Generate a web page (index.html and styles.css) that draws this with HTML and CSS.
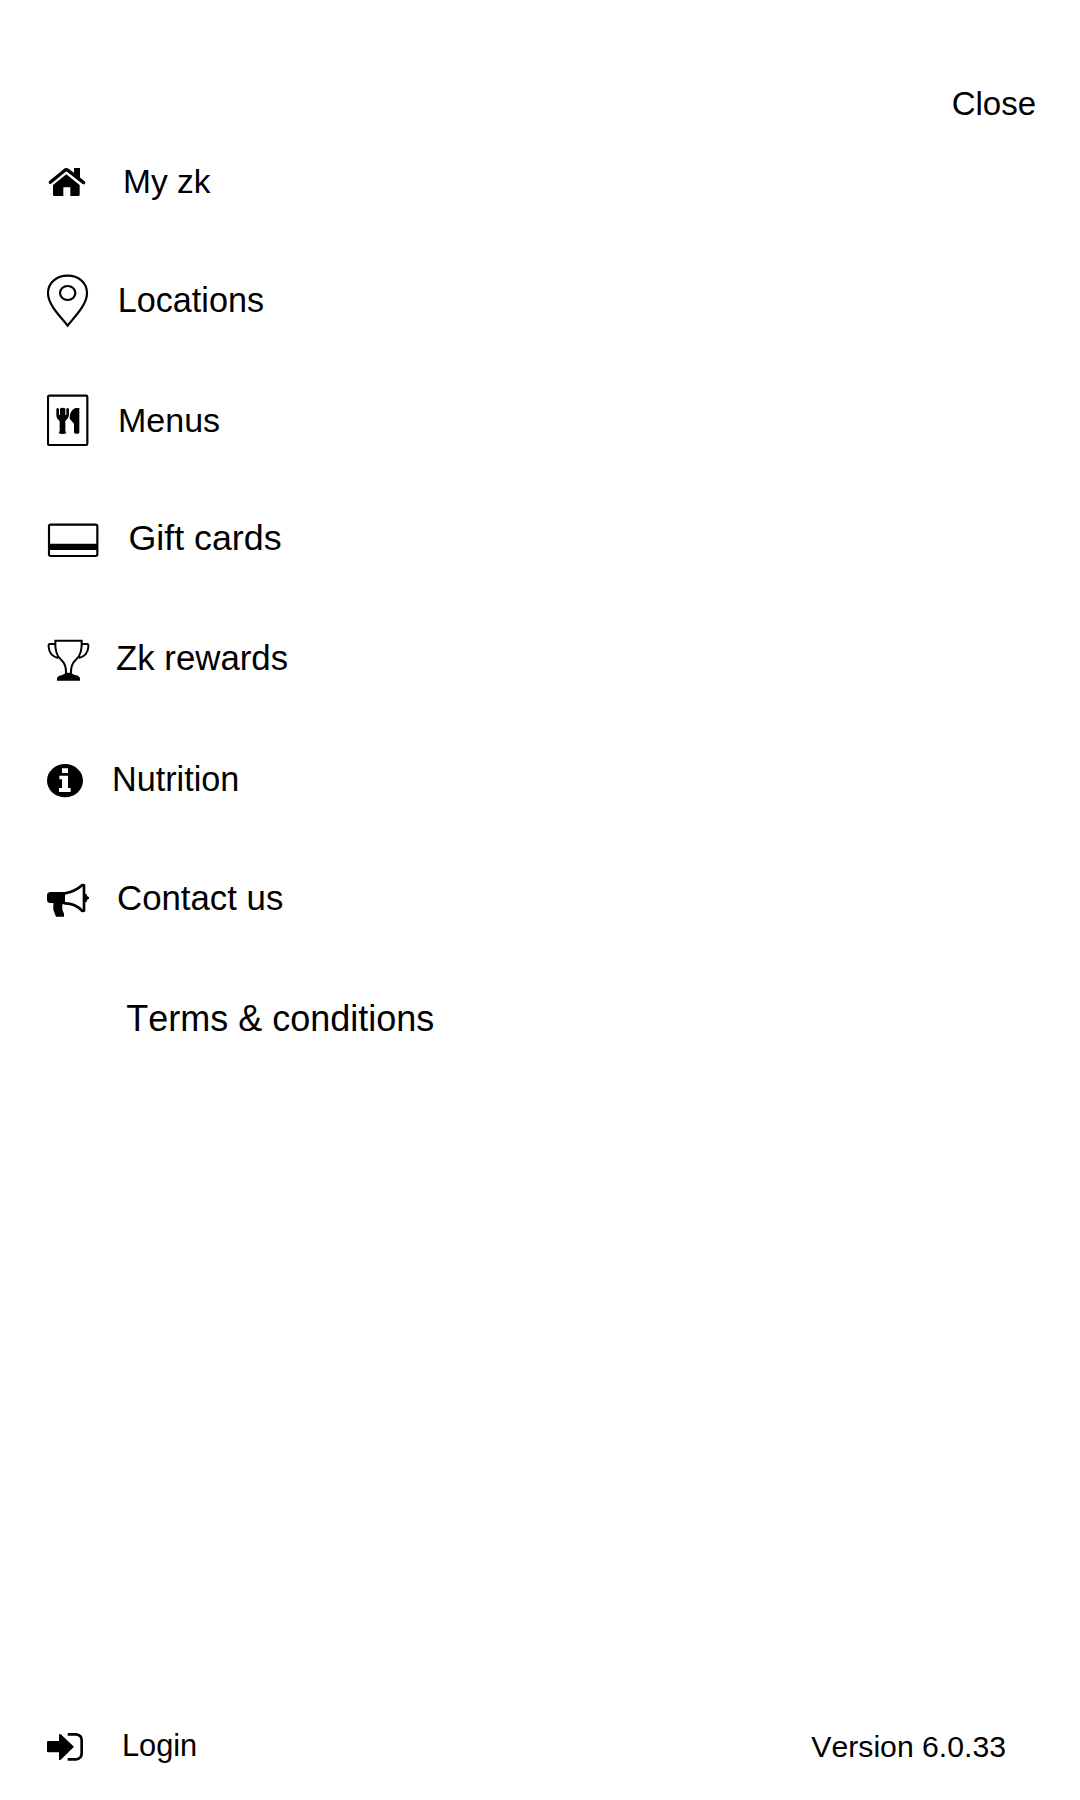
FILE: index.html
```html
<!DOCTYPE html>
<html lang="en">
<head>
<meta charset="utf-8">
<title>Menu</title>
<link rel="stylesheet" href="styles.css">
</head>
<body>
<main class="screen">
  <header class="top"><span class="close">Close</span></header>
  <nav class="menu">
    <a class="row home">
      <svg class="icon" viewBox="51 0 168 180"><path d="M69 105 109 73 149 105V134Q149 138 145 138H121V112H100V138H73Q69 138 69 134Z"/><path d="M132 54H150V88L132 74Z"/><path class="roof" d="M61 97 103 62Q109 57 115 62L161 98"/></svg>
      <span class="label">My zk</span>
    </a>
    <a class="row locations">
      <svg class="icon line" viewBox="51 30 168 180"><path d="M113 197C99 177 54 137 54 100C54 67 81 47 113 47S171 67 171 100C171 137 127 177 113 197Z"/><ellipse cx="113" cy="99" rx="23" ry="21"/></svg>
      <span class="label">Locations</span>
    </a>
    <a class="row menus">
      <svg class="icon" viewBox="51 30 168 180"><rect class="line" x="54" y="47" width="118" height="148" rx="4"/><path d="M79 87Q83 81 87 87V105H90V87Q93 81 97 84H99Q103 81 106 87V105H109V87Q112 81 117 87V106Q116 116 106 123V152L109 160Q97 164 86 160L89 152V123Q79 116 79 106ZM148 84V158Q141 165 132 158V131L119 116Q118 92 136 84Z"/></svg>
      <span class="label">Menus</span>
    </a>
    <a class="row gift">
      <svg class="icon" viewBox="51 0 168 180"><rect class="line" x="57" y="44" width="145" height="94" rx="5"/><path d="M56 101H202V120H56Z"/></svg>
      <span class="label">Gift cards</span>
    </a>
    <a class="row rewards">
      <svg class="icon" viewBox="51 15 168 180"><path class="cup" d="M76 47H155Q157 88 139 103Q121 119 123 146H108Q110 119 92 103Q74 88 76 47ZM75 61V57H60Q55 57 56 66Q58 92 84 99M156 61V57H171Q176 57 175 66Q173 92 147 99"/><path d="M81 167V158Q86 150 97 150L106 145H124L134 150Q145 150 150 160V167Z"/></svg>
      <span class="label">Zk rewards</span>
    </a>
    <a class="row nutrition">
      <svg class="icon" viewBox="51 0 168 180"><ellipse cx="105" cy="92" rx="54" ry="50"/><path class="cut" d="M96 55H114V69H96ZM88 77H114V114H122V126H87V114H96V88H88Z"/></svg>
      <span class="label">Nutrition</span>
    </a>
    <a class="row contact">
      <svg class="icon" viewBox="51 0 168 180"><path d="M60 66H105V103H97V119L102 131V140H78L70 119V99H58Q51 97 51 90V74Q51 68 60 66ZM163 72H170L171 78 177 82V86L171 90 170 96H163Z"/><path class="horn" d="M104 70Q135 65 157 45L162 46V122L157 123Q135 99 103 100"/></svg>
      <span class="label">Contact us</span>
    </a>
    <a class="row terms"><span class="label">Terms &amp; conditions</span></a>
  </nav>
  <footer class="bottom">
    <a class="row login">
      <svg class="icon" viewBox="51 0 168 180"><path d="M54 78H87V58Q91 56 94 59L132 95 94 133Q91 136 87 134V112H54Q51 112 51 109V81Q51 78 54 78Z"/><path class="door" d="M113 58H139Q155 61 155 75V115Q155 131 139 133H113"/></svg>
      <span class="label">Login</span>
    </a>
    <span class="version">Version 6.0.33</span>
  </footer>
</main>
</body>
</html>
```
FILE: styles.css
```css
body {
  margin: 0;
  background: #fff;
  color: #000;
  font-family: "Liberation Sans", Arial, sans-serif;
  font-kerning: none;
}
.screen {
  box-sizing: border-box;
  height: 1800px;
  padding: 73px 0 25px 47px;
  display: flex;
  flex-direction: column;
}
.top {
  height: 47px;
  padding-right: 44px;
  display: flex;
  justify-content: flex-end;
}
.close { font-size: 33px; line-height: 62px; }
.row {
  height: 120px;
  display: flex;
  align-items: center;
}
.icon {
  flex: none;
  width: 56px;
  height: 60px;
}
.line, .cup, .roof, .horn, .door { fill: none; stroke: #000; }
.line { stroke-width: 6.5; }
.cup { stroke-width: 6; }
.roof { stroke-width: 10; stroke-linecap: round; }
.home .roof { filter: drop-shadow(0 3px 0 #fff); }
.horn { stroke-width: 8; stroke-linejoin: round; }
.door { stroke-width: 8; }
.cut { fill: #fff; }
.label { line-height: 60px; white-space: nowrap; }
.home .label { font-size: 33.5px; margin: 3px 0 0 20px; }
.locations .label { font-size: 34.2px; margin: 0 0 0 14.7px; }
.menus .label { font-size: 34px; margin-left: 15px; }
.gift .label { font-size: 35.8px; margin: -5px 0 0 25.4px; }
.rewards .label { font-size: 34.8px; margin: -4px 0 0 13px; }
.nutrition .label { font-size: 34.2px; margin: -2px 0 0 9px; }
.contact .label { font-size: 34.8px; margin: -4px 0 0 14px; }
.terms .label { font-size: 36px; margin: -2px 0 0 79.2px; }
.bottom {
  height: 60px;
  margin-top: auto;
  padding-right: 74px;
  display: flex;
  align-items: flex-start;
  justify-content: space-between;
}
.login { height: 60px; }
.login .label { font-size: 30.8px; margin: 2px 0 0 18.9px; }
.version { font-size: 30.2px; line-height: 60px; margin-top: 2px; }
```
